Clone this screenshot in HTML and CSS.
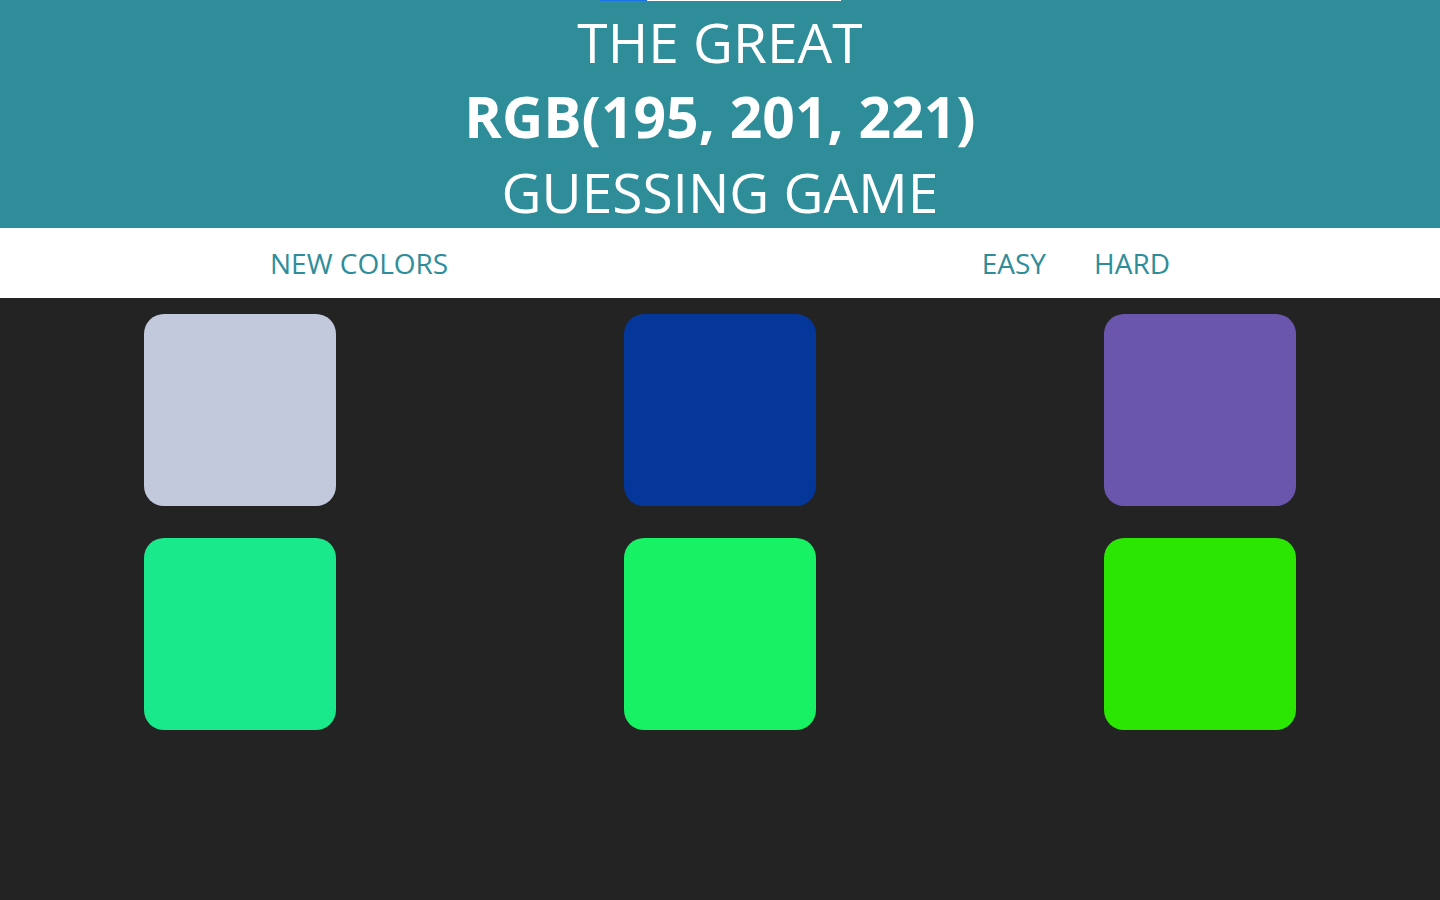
FILE: index.html
```html
<!DOCTYPE html>
<html lang="en">
<head>
  <meta charset="UTF-8" />
  <title>Color Guessing Game</title>
  <meta name="viewport" content="width=device-width, initial-scale=1.0"/>
  <link rel="stylesheet" href="styles.css">
</head>
<body>
  <!-- Header -->
  <h1 class="title">
    <span class="loader"><span class="loader-fill"></span></span>
    THE GREAT
    <br />
    <span id="colorDisplay">RGB(195, 201, 221)</span>
    <br />
    GUESSING GAME
  </h1>

  <!-- Controls -->
  <div class="stripe">
    <div class="stripe-inner">
      <button id="reset">NEW COLORS</button>
      <span id="message"></span>
      <div class="modes">
        <button class="mode">EASY</button>
        <button class="mode">HARD</button>
      </div>
    </div>
  </div>

  <!-- Squares -->
  <div id="container">
    <div class="square" style="background-color: rgb(195, 201, 221);"></div>
    <div class="square" style="background-color: rgb(4, 55, 153);"></div>
    <div class="square" style="background-color: rgb(106, 87, 173);"></div>
    <div class="square" style="background-color: rgb(26, 233, 139);"></div>
    <div class="square" style="background-color: rgb(22, 242, 99);"></div>
    <div class="square" style="background-color: rgb(42, 230, 0);"></div>
  </div>
</body>
</html>
```

FILE: styles.css
```css
body {
  background-color: #232323;
  margin: 0;
  font-family: 'Open Sans', 'Noto Sans', sans-serif;
}
.title {
  position: relative;
  margin: 0;
  background-color: #2e8d99;
  color: #fff;
  text-align: center;
  font-weight: normal;
  font-size: 55px;
  line-height: 75px;
  height: 228px;
  padding-top: 4px;
  box-sizing: border-box;
  text-transform: uppercase;
}
.loader {
  position: absolute;
  top: 0;
  left: 600px;
  width: 241px;
  height: 1px;
  background-color: #fff;
  display: flex;
}
.loader-fill {
  width: 47px;
  background-color: #1a73e8;
}
#colorDisplay {
  font-weight: bold;
  font-size: 57px;
}
.stripe {
  background-color: #fff;
  height: 70px;
}
.stripe-inner {
  width: 900px;
  height: 100%;
  margin: 0 auto;
  display: flex;
  align-items: center;
  justify-content: space-between;
}
.modes {
  display: flex;
  gap: 48px;
}
button {
  border: none;
  background: none;
  padding: 0;
  color: #2e8d99;
  font-family: inherit;
  font-size: 28px;
  cursor: pointer;
}
#container {
  display: grid;
  grid-template-columns: repeat(3, 1fr);
  justify-items: center;
  row-gap: 32px;
  padding-top: 16px;
}
.square {
  width: 192px;
  height: 192px;
  border-radius: 20px;
}
```
